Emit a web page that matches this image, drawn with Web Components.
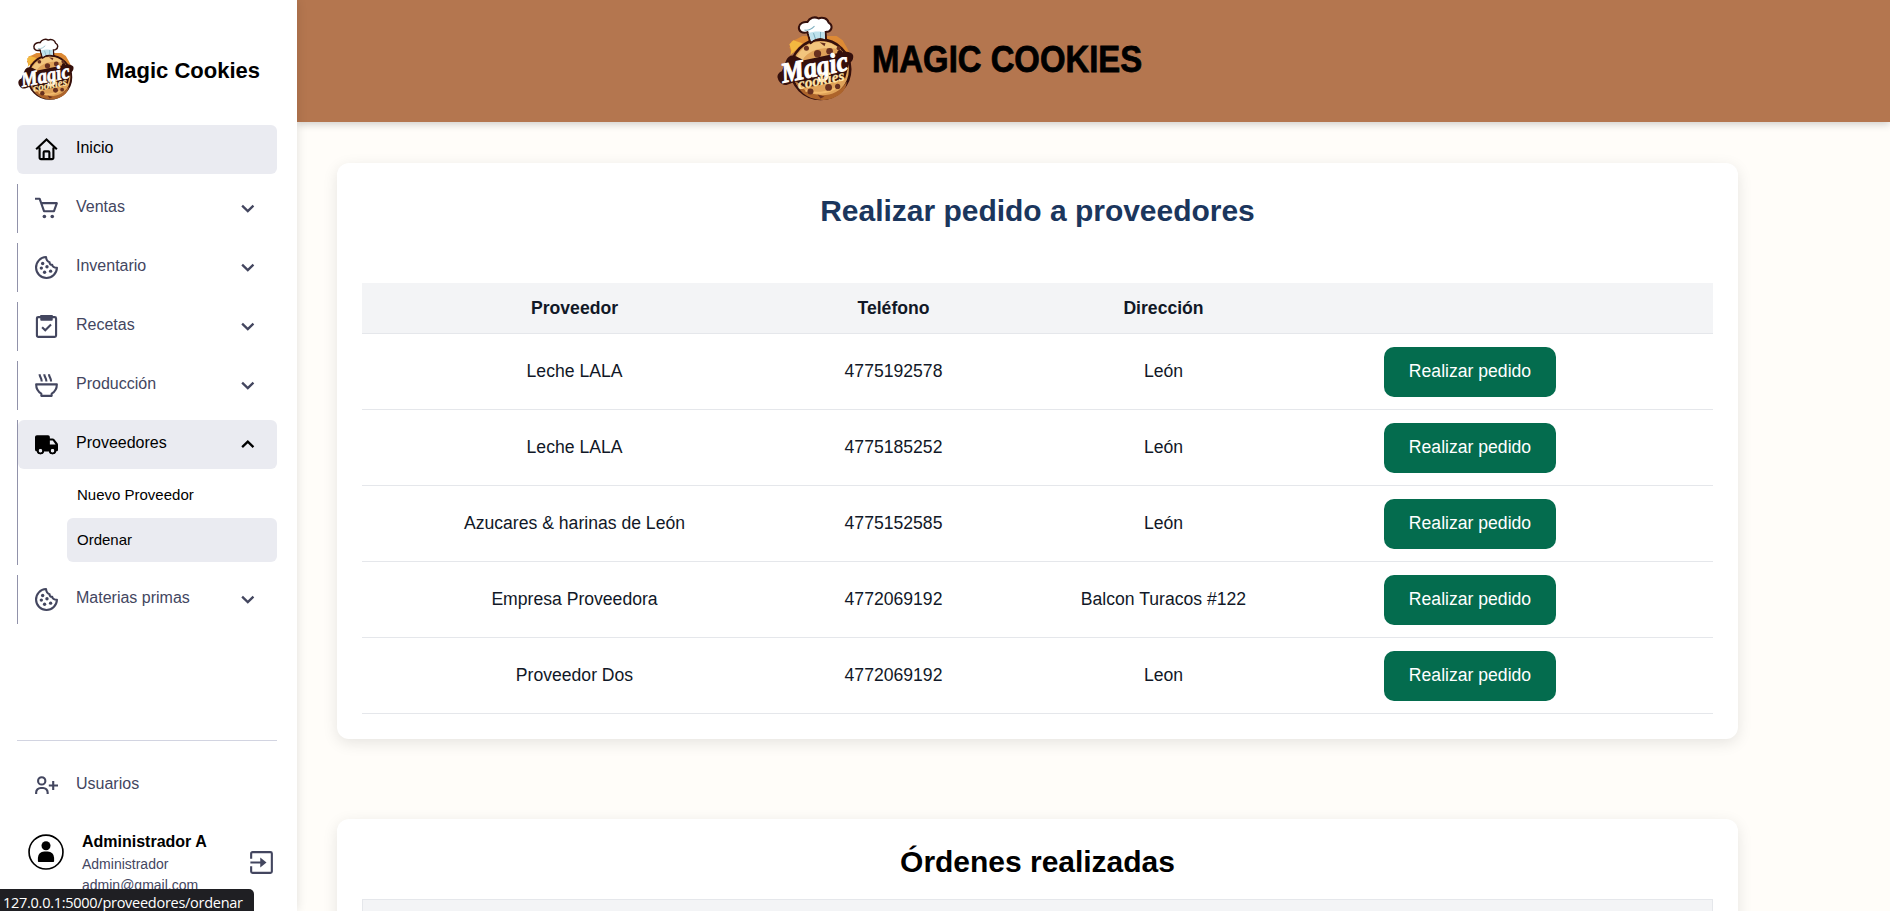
<!DOCTYPE html>
<html lang="es">
<head>
<meta charset="utf-8">
<title>Magic Cookies</title>
<style>
html,body{margin:0;height:100%;overflow:hidden;background:#fffdf9;font-family:"Liberation Sans",Arial,sans-serif}
</style>
</head>
<body>
<mc-app></mc-app>
<script>
const define = (name, html) => customElements.define(name, class extends HTMLElement {
  constructor() {
    super();
    const t = document.createElement('template');
    t.innerHTML = typeof html === 'function' ? html(this) : html;
    this.attachShadow({mode: 'open'}).append(t.content.cloneNode(true));
  }
});

const ICONS = {
  home: '<path d="M4.8 10v10.6a1.4 1.4 0 0 0 1.4 1.4h11.6a1.4 1.4 0 0 0 1.4-1.4V10M1.200 11.700 12 1.600l10.800 10.100" stroke-linejoin="miter"/><path d="M9 22v-7a1 1 0 0 1 1-1h4a1 1 0 0 1 1 1v7"/>',
  cart: '<path d="M0 1.800h4.800l4.600 13h10.400L22.800 6.400H6.400" stroke-linejoin="round"/><circle cx="9.800" cy="20.400" r="1.900" class="f"/><circle cx="18" cy="20.400" r="1.900" class="f"/>',
  cookie: '<path d="M11.500 1.100A10.900 10.900 0 1 0 22.900 12.300c-2.700 0-4.500-.9-4.900-3-1.900 0-2.800-1-2.800-2.800-2.300-.6-3.500-2.400-3.700-5.400z" stroke-linejoin="round"/><g class="f"><circle cx="8" cy="7.800" r="1.750"/><circle cx="6.600" cy="12.600" r="1.750"/><circle cx="12.500" cy="11.200" r="1.750"/><circle cx="10" cy="17" r="1.750"/><circle cx="16.300" cy="15.800" r="1.750"/></g>',
  clip: '<rect x="2" y="2.200" width="20" height="20.600" rx="1.500"/><path class="f" d="M5.500 0h13v5a1 1 0 0 1-1 1h-11a1 1 0 0 1-1-1z"/><path d="m7.400 12.800 3.300 3.200 6-6"/>',
  bowl: '<path d="M1.200 10.800h21.600c0 4.500-2.300 8-5.400 9.700v2.300H6.600v-2.300C3.500 18.800 1.200 15.300 1.200 10.800z" stroke-linejoin="round"/><path d="M4.800.3c0 3 2.200 4 2.200 7.400M9.700.3c0 3 2.200 4 2.200 7.400M14.600.3c0 3 2.200 4 2.200 7.400"/>',
  truck: '<path class="f" fill-rule="evenodd" d="M2 2.300h11.600A1.900 1.900 0 0 1 15.500 4.200v1.600h3c.7 0 1.300.3 1.700.8l3.100 3.900c.4.500.7 1 .7 1.700v5.300c0 1-.8 1.800-1.800 1.800h-.300a3.700 3.700 0 0 1-7.200 0h-5.400a3.700 3.700 0 0 1-7.200 0A2 2 0 0 1 0 17.300V4.200A2 2 0 0 1 2 2.300zM15.500 7.700v4.200h6l-3-4z"/><circle cx="5.700" cy="18.500" r="2" fill="#eaebf1" stroke="none"/><circle cx="18.300" cy="18.500" r="2" fill="#eaebf1" stroke="none"/><circle cx="5.700" cy="18.500" r="2.900" stroke-width="1.700"/><circle cx="18.300" cy="18.500" r="2.900" stroke-width="1.700"/>',
  useradd: '<circle cx="7" cy="7.200" r="3.800"/><path d="M1.200 20.800v-1.400a4.800 4.800 0 0 1 4.800-4.800h2.400a4.800 4.800 0 0 1 4.800 4.800v1.400M19 7.300v9.400M14.400 12h9.600"/>',
  down: '<path d="m6.400 9 5.900 5.800L18.200 9" stroke-width="2.400"/>',
  up: '<path d="m6.400 14.800 5.900-5.800 5.900 5.800" stroke-width="2.400"/>',
  exit: '<path d="M1.200 8V2.700a1.500 1.500 0 0 1 1.500-1.500h18.600a1.500 1.500 0 0 1 1.500 1.500v18.600a1.500 1.500 0 0 1-1.500 1.500H2.700a1.500 1.500 0 0 1-1.500-1.500V16M.4 12h13"/><path class="f" d="M10.700 6.800 17.200 12l-6.500 5.200z"/>',
  person: '<circle cx="12" cy="12" r="11.300" stroke-width="1.100"/><circle cx="12" cy="7.800" r="3" class="f"/><path class="f" d="M6.600 18v-2.200a4.200 4.200 0 0 1 4.200-4.200h2.400a4.200 4.200 0 0 1 4.200 4.200V18c0 .4-.3.700-.7.700H7.300c-.4 0-.7-.3-.7-.7z"/>'
};
define('mc-icon', el => `<style>
:host{display:block;width:23px;height:23px;flex:none}
svg{display:block;width:100%;height:100%;overflow:visible;fill:none;stroke:currentColor;stroke-width:2.200}
.f{fill:currentColor;stroke:none}
</style><svg viewBox="0 0 24 24">${ICONS[el.getAttribute('name')]}</svg>`);

define('mc-logo', `<style>
:host{display:block;flex:none}
svg{display:block;width:100%;height:100%;overflow:visible}
text{font-family:"Liberation Serif",serif;font-style:italic;font-weight:700}
</style><svg viewBox="6 7 78 84.500">
<path d="M21 42l-2-5 3-2-1-4 5-2 6-3 34 0 6 4 4 7 3 6-6 14z" fill="#dd8a35"/>
<path d="M23 30l-4 4 2 6-1 5 12-12z" fill="#f3b840"/>
<circle cx="50" cy="59" r="29.500" fill="#dfa259" stroke="#35100c" stroke-width="2.600"/>
<path d="M26 47c7-15 30-22 44-7-12-4-30-3-38 10z" fill="#f2c57d"/>
<path d="M24 68c8 18 39 25 52 3 0 21-44 29-52-3z" fill="#ad642b"/>
<path d="M35 80c8 4 22 3 31-3" fill="none" stroke="#f3ba6c" stroke-width="2"/>
<g fill="#68301f"><circle cx="47" cy="43.500" r="3.600"/><circle cx="59" cy="41" r="3.300"/><circle cx="36" cy="38" r="2.500"/><circle cx="68" cy="38" r="2"/><circle cx="58" cy="77" r="3.400"/><circle cx="67" cy="76" r="2.600"/><circle cx="40" cy="81" r="3"/><path d="m49 32 6 1-1 3zM47 84l7 2-4 2z"/></g>
<path d="M40 33 37 22c-5 2-9-1-8.500-5s5-5.500 8.500-5c2-4 7-6 11-3.500 4-2 9 0 10 4 4 2 4 7 0 9l-3 .5.500 8c-5-2-11-1-15.500 3z" fill="#fff" stroke="#35100c" stroke-width="2" stroke-linejoin="round"/>
<path d="M38 23c4-2 12-2 16-1l.5 7c-5-2-9-1-13.500 2z" fill="#bfe2ec"/><path d="M43 23l2 6M50 22v6M34 20c5 1 8-2 10-4" stroke="#7eafbf" fill="none"/>
<path d="M7.500 68c-1-3 1-6 4-7l4-10c2-6 7-7 12-4l6 3 33-7c0-4 5-4 5-1 4-1 12 0 11 5 0 3-2 5-4 6l-4 15c-14 4-27 8-40 9l-9-6-8 3c-5 2-9-2-10-6z" fill="#35100c"/>
<g transform="rotate(-11 45 60)"><text x="11" y="66" font-size="28" fill="#fff" stroke="#fff" stroke-width="1" textLength="67" lengthAdjust="spacingAndGlyphs">Magic</text></g>
<g transform="rotate(-11 50 70)"><text x="27" y="74.500" font-size="15" fill="#ffe4a8" stroke="#ffe4a8" stroke-width=".3" textLength="47" lengthAdjust="spacingAndGlyphs">cookies</text></g>
</svg>`);

define('mc-nav-item', el => `<style>
:host{display:block;box-sizing:border-box;color:#43465f;font-size:16px}
:host([group]){border-left:1px solid #9192aa}
.row{display:flex;align-items:center;height:49px;box-sizing:border-box;padding-left:18px;border-radius:6px}
:host([group]) .row{padding-left:17px}
:host([active]) .row{background:#eaebf1;color:#000}
.label{flex:1;margin-left:18px;line-height:20px;padding-bottom:3px}
.arrow{margin-right:18px}
</style><div class="row"><mc-icon name="${el.getAttribute('icon')}"></mc-icon><span class="label">${el.getAttribute('label')}</span>${el.hasAttribute('group') ? `<mc-icon class="arrow" name="${el.hasAttribute('active') ? 'up' : 'down'}"></mc-icon>` : ''}</div><slot></slot>`);

define('mc-sub-item', `<style>
:host{display:flex;align-items:center;box-sizing:border-box;height:44px;margin-left:49px;padding:0 0 2px 10px;border-radius:6px;font-size:15px;color:#000}
:host([active]){background:#eaebf1}
</style><slot></slot>`);

define('mc-sidebar', `<style>
:host{display:flex;flex-direction:column;box-sizing:border-box;width:297px;height:911px;padding:39px 20px 0 17px;background:#fff;box-shadow:0 0 10px rgba(0,0,0,.12);overflow:visible}
.brand{display:flex;align-items:center;height:62px}
.brand mc-logo{width:58px;height:62px}
.brand b{margin-left:31px;font-size:22px;padding-top:2px}
nav{display:flex;flex-direction:column;gap:10px;margin-top:24px;height:615px;border-bottom:1px solid #d2d4e1}
.subs{padding:4px 0 3px;display:flex;flex-direction:column;gap:1px}
.users{margin-top:20px}
.who{display:flex;margin-top:19px}
.who>.pic{width:36px;height:36px;margin:5px 0 0 11px}
.info{margin-left:18px;flex:1;font-size:14px;color:#43465f;line-height:21px;padding-top:7px}
.info b{display:block;color:#000;font-size:16px;line-height:20px;margin-bottom:2px;margin-top:-4px}
.info span{display:block}
.who>.out{width:23px;height:23px;margin:22px 4px 0 0;color:#43465f}
</style>
<div class="brand"><mc-logo></mc-logo><b>Magic Cookies</b></div>
<nav>
<mc-nav-item icon="home" label="Inicio" active></mc-nav-item>
<mc-nav-item group icon="cart" label="Ventas"></mc-nav-item>
<mc-nav-item group icon="cookie" label="Inventario"></mc-nav-item>
<mc-nav-item group icon="clip" label="Recetas"></mc-nav-item>
<mc-nav-item group icon="bowl" label="Producción"></mc-nav-item>
<mc-nav-item group icon="truck" label="Proveedores" active><div class="subs"><mc-sub-item>Nuevo Proveedor</mc-sub-item><mc-sub-item active>Ordenar</mc-sub-item></div></mc-nav-item>
<mc-nav-item group icon="cookie" label="Materias primas"></mc-nav-item>
</nav>
<mc-nav-item class="users" icon="useradd" label="Usuarios"></mc-nav-item>
<div class="who"><mc-icon class="pic" name="person"></mc-icon><div class="info"><b>Administrador A</b><span>Administrador</span><span>admin@gmail.com</span></div><mc-icon class="out" name="exit"></mc-icon></div>`);

define('mc-header', `<style>
:host{display:flex;height:122px;box-sizing:border-box;padding:17px 0 0 479px;background:#b4764f;box-shadow:0 2px 8px rgba(0,0,0,.2)}
mc-logo{width:79px;height:85px}
h1{margin:22px 0 0 17px;width:274px;font-size:37px;line-height:42px;white-space:nowrap;transform:scaleX(.888);transform-origin:0 0;color:#000;-webkit-text-stroke:.8px #000}
</style><mc-logo></mc-logo><h1>MAGIC COOKIES</h1>`);

define('mc-card', `<style>
:host{display:block;box-sizing:border-box;width:1401px;padding:0 25px;background:#fff;border-radius:12px;box-shadow:0 4px 15px rgba(0,0,0,.1)}
</style><slot></slot>`);

define('mc-button', `<style>
:host{display:inline-flex;align-items:center;justify-content:center;width:172px;height:50px;border-radius:10px;background:#046c4e;color:#fff;font-size:17.600px}
</style><slot></slot>`);

define('mc-row', `<style>
:host{display:grid;grid-template-columns:425px 213px 327px 286px 1fr;align-items:center;justify-items:center;height:76px;box-sizing:border-box;border-bottom:1px solid #e5e7eb;color:#111827;font-size:17.600px}
:host([head]){height:51px;background:#f3f4f6;font-weight:700}
</style><slot></slot>`);

const rows = [
  ['Leche LALA', '4775192578', 'León'],
  ['Leche LALA', '4775185252', 'León'],
  ['Azucares &amp; harinas de León', '4775152585', 'León'],
  ['Empresa Proveedora', '4772069192', 'Balcon Turacos #122'],
  ['Proveedor Dos', '4772069192', 'Leon']
];
define('mc-app', `<style>
:host{display:flex;height:911px;overflow:hidden;position:relative}
mc-sidebar{position:relative;z-index:1;flex:none}
.right{flex:1}
main{display:flex;flex-direction:column;gap:80px;padding:41px 0 0 40px}
h2{margin:0;text-align:center;font-size:30px;line-height:36px;letter-spacing:-.02px}
.orders{height:576px;padding-bottom:0}
.orders h2{color:#1b365d;padding:30px 0 54px}
.done{height:200px}
.done h2{padding:25px 0 19px;color:#000}
.strip{height:60px;background:#f3f4f6;border:1px solid #e5e7eb}
.status{position:absolute;left:0;bottom:0;z-index:2;width:254px;height:22px;box-sizing:border-box;padding-left:3px;background:#1f1f23;color:#fff;border-radius:0 5px 0 0;font:14.500px/27px "Open Sans",sans-serif;letter-spacing:-.27px;white-space:nowrap}
</style>
<mc-sidebar></mc-sidebar>
<div class="right"><mc-header></mc-header><main>
<mc-card class="orders"><h2>Realizar pedido a proveedores</h2>
<mc-row head><span>Proveedor</span><span>Teléfono</span><span>Dirección</span></mc-row>
${rows.map(r => `<mc-row>${r.map(c => `<span>${c}</span>`).join('')}<mc-button>Realizar pedido</mc-button></mc-row>`).join('')}
</mc-card>
<mc-card class="done"><h2>Órdenes realizadas</h2><div class="strip"></div></mc-card>
</main></div>
<div class="status">127.0.0.1:5000/proveedores/ordenar</div>`);
</script>
</body>
</html>
